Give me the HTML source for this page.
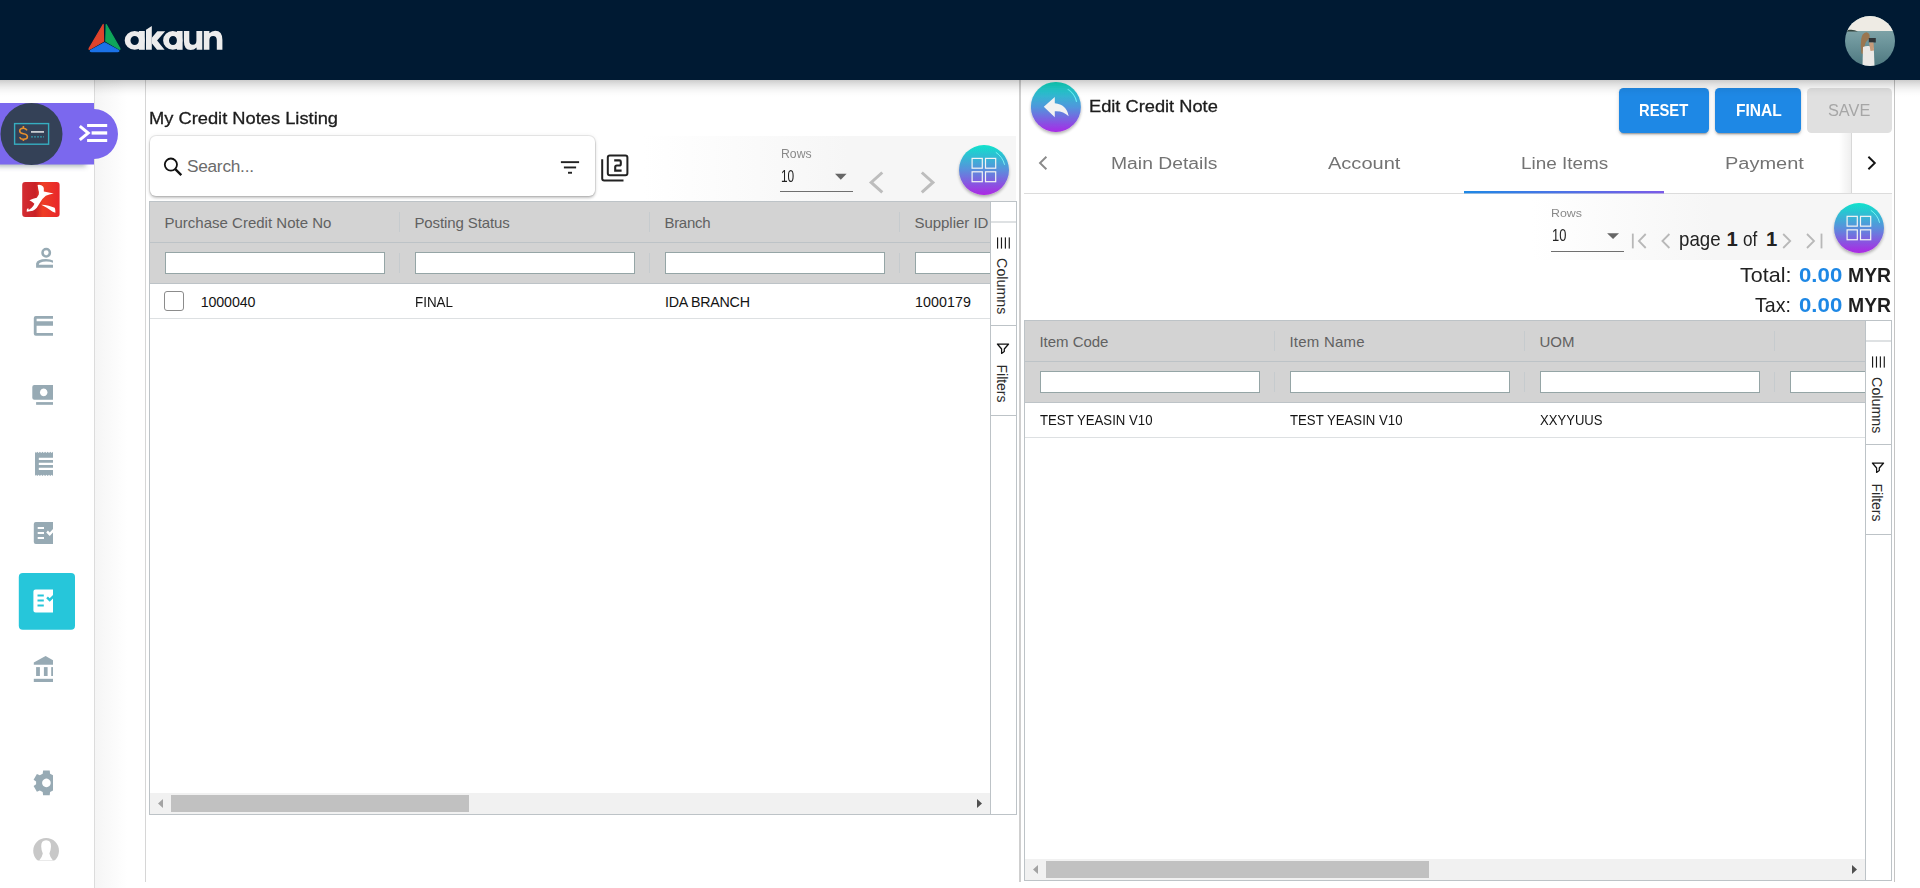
<!DOCTYPE html>
<html><head><meta charset="utf-8">
<style>
*{box-sizing:border-box;margin:0;padding:0}
html,body{width:1920px;height:888px;overflow:hidden;background:#fff;font-family:"Liberation Sans",sans-serif;position:relative}
.a{position:absolute}
.t{position:absolute;white-space:nowrap;font-family:"Liberation Sans",sans-serif}
.hdr{left:0;top:0;width:1920px;height:80px;background:#001a33;z-index:5}
.hshadow{left:0;top:80px;width:1920px;height:17px;background:linear-gradient(to bottom,rgba(0,0,0,.2),rgba(0,0,0,.12) 4px,rgba(0,0,0,.075) 7px,rgba(0,0,0,.04) 10px,rgba(0,0,0,.015) 13px,rgba(0,0,0,0));z-index:4}
.side{left:0;top:80px;width:95px;height:808px;background:#fff;border-right:1px solid #dcdcdc}
.gapg{left:95px;top:80px;width:32px;height:808px;background:linear-gradient(to right,#f5f5f5,#fff)}
.vl145{left:145px;top:80px;width:1px;height:802px;background:#d6d6d6}
.split{left:1019px;top:80px;width:2px;height:802px;background:#cfcfcf}
.vl1894{left:1894px;top:80px;width:1px;height:802px;background:#c4c4c4}
.card{background:#fff;border-radius:6px;box-shadow:0 0 0 1px rgba(0,0,0,.07),0 0 5px 0 rgba(0,0,0,.08),0 2px 3px 0 rgba(0,0,0,.22)}
.hl{position:absolute;background:#bdc3c7}
.finp{position:absolute;background:#fff;border:1px solid #95a5a6}
.csep{position:absolute;width:1px;background:#c6cbce}
.btn{position:absolute;border-radius:4.5px}
</style></head><body>
<div class="a hdr">
<svg class="a" style="left:0;top:0" width="1920" height="80" viewBox="0 0 1920 80">
 <g stroke-linejoin="round">
  <path d="M103.2,24.5 L103.6,41.2 L89.6,49.2 Q88.6,49.6 89.2,48.4 Z" fill="#e0442c" stroke="#e0442c" stroke-width="1.2"/>
  <path d="M106.2,24.5 L119.8,48.4 Q120.4,49.6 119.4,49.2 L105.8,41.2 Z" fill="#0fa65a" stroke="#0fa65a" stroke-width="1.2"/>
  <path d="M104.6,42.8 L118.8,50.6 Q119.2,51.6 117.6,51.7 L91.6,51.7 Q90,51.6 90.4,50.6 Z" fill="#1b72e8" stroke="#1b72e8" stroke-width="1.2"/>
 </g>
 <g fill="#ececec" fill-rule="evenodd">
  <path d="M124.7,40.4 A10,9.4 0 1 0 144.7,40.4 A10,9.4 0 1 0 124.7,40.4 Z M130.5,40.5 A4.2,4.5 0 1 0 138.9,40.5 A4.2,4.5 0 1 0 130.5,40.5 Z"/>
  <rect x="138.9" y="31" width="5.9" height="18.8"/>
  <path d="M146,29.7 L151.8,25.9 V49.8 H146 Z"/>
  <path d="M151.8,37.7 L157.3,31.2 H165.2 L157.1,40.5 L164.6,49.8 H157 L151.8,43.3 Z"/>
  <path d="M163.1,40.4 A9.7,9.4 0 1 0 182.5,40.4 A9.7,9.4 0 1 0 163.1,40.4 Z M169,40.5 A4,4.5 0 1 0 177,40.5 A4,4.5 0 1 0 169,40.5 Z"/>
  <rect x="176.9" y="31" width="5.7" height="18.8"/>
  <path d="M183.9,31 H189.3 V40.5 A3.55,4.3 0 0 0 196.4,40.5 V31 H202.3 V49.8 H196.6 V47.4 Q194.2,50 190.6,50 Q183.9,50 183.9,41 Z"/>
  <path d="M203.8,49.8 V31 H209.4 V33.3 Q211.7,30.8 215.2,30.8 Q222.4,30.8 222.4,40 V49.8 H216.8 V40.3 A3.7,4.3 0 0 0 209.4,40.3 V49.8 Z"/>
 </g>
 <defs>
  <clipPath id="avc"><circle cx="1870" cy="41" r="25"/></clipPath>
  <linearGradient id="sea" x1="0" y1="0" x2="0" y2="1"><stop offset="0" stop-color="#92b1b3"/><stop offset="0.5" stop-color="#6f979d"/><stop offset="1" stop-color="#4e7880"/></linearGradient>
 </defs>
 <g clip-path="url(#avc)">
  <rect x="1845" y="16" width="50" height="50" fill="url(#sea)"/>
  <rect x="1845" y="16" width="50" height="15" fill="#eeebe4"/>
  <path d="M1845,31.6 Q1847,29.6 1850,29.8 Q1854,29.4 1858,31.6 Z" fill="#34453f"/>
  <path d="M1866.5,32.3 Q1862,33 1861.2,39 Q1860.2,46 1861.4,53.5 L1863.5,54 Q1864,46 1866,42 L1869.5,38 Q1870.5,33.5 1866.5,32.3 Z" fill="#9a7650"/>
  <path d="M1863,47 Q1866,45.5 1869,46 L1873.8,48 L1874.5,66 L1862.5,66 Z" fill="#ebe8e6"/>
  <path d="M1868.8,38 L1875.8,38 L1875.8,42.6 L1868.8,42.6 Z" fill="#2e3336"/>
  <path d="M1869,42.6 L1873.5,42.6 L1874,50.5 L1870.5,51 Z" fill="#c79b7a"/>
 </g>
</svg>
</div>
<div class="a hshadow"></div>
<div class="a side"></div>
<svg class="a" style="left:0;top:80px;z-index:6" width="140" height="808" viewBox="0 80 140 808">
 <defs>
  <filter id="pshadow" x="-20%" y="-20%" width="140%" height="160%"><feGaussianBlur in="SourceAlpha" stdDeviation="3"/><feOffset dy="4"/><feComponentTransfer><feFuncA type="linear" slope="0.25"/></feComponentTransfer><feMerge><feMergeNode/><feMergeNode in="SourceGraphic"/></feMerge></filter>
  <linearGradient id="redg" x1="0" x2="1" y1="0" y2="0"><stop offset="0" stop-color="#d42d33"/><stop offset="0.35" stop-color="#c92127"/><stop offset="0.55" stop-color="#ee3d24"/><stop offset="1" stop-color="#e8262b"/></linearGradient>
  <clipPath id="clip53"><rect x="0" y="80" width="53" height="808"/></clipPath>
 </defs>
 <defs><filter id="pblur" x="-20%" y="-100%" width="140%" height="300%"><feGaussianBlur stdDeviation="2.6"/></filter></defs>
 <rect x="-4" y="158.5" width="90" height="8" fill="rgba(60,80,90,.42)" filter="url(#pblur)"/>
 <path d="M0,103 H94 V109 A24,25 0 0 1 94,159 V164.5 H0 Z" fill="#7b68ee"/>
 <circle cx="31.5" cy="134" r="31" fill="#344157"/>
 <rect x="14.6" y="123.6" width="34" height="20.6" fill="none" stroke="#36adc0" stroke-width="1.4"/>
 <g fill="none" stroke="#e8902c" stroke-width="1.6"><path d="M27,130.4 Q26,128.2 23.4,128.2 Q19.7,128.2 19.7,131 Q19.7,133.2 23.4,133.8 Q27.4,134.5 27.4,136.8 Q27.4,139.3 23.4,139.3 Q20.5,139.3 19.6,137.2"/><line x1="23.4" y1="126" x2="23.4" y2="128.2"/><line x1="23.4" y1="139.3" x2="23.4" y2="141"/></g>
 <rect x="31" y="131" width="13" height="1.8" fill="#c9cdd2"/>
 <line x1="31.2" y1="136.8" x2="44" y2="136.8" stroke="#36adc0" stroke-width="1.3" stroke-dasharray="1.6,1.4"/>
 <polyline points="79.8,126.2 88.2,133 79.8,139.8" fill="none" stroke="#fff" stroke-width="3"/>
 <rect x="87.1" y="124" width="20.1" height="3" fill="#fff"/>
 <rect x="91.6" y="131.3" width="15.6" height="3.3" fill="#fff"/>
 <rect x="87.1" y="139" width="20.1" height="3" fill="#fff"/>

 <rect x="22.2" y="181.9" width="37.4" height="35" rx="3" fill="url(#redg)"/>
 <path d="M37.6,184.9 Q40,184.6 41.3,185.2 Q43.6,186.4 43.8,187.9 L43.8,191.4 L53.7,193.4 Q49,194.2 45.8,195.8 Q41.5,199 39.3,203.8 L36.8,207.7 Q35,209.8 32.9,210.7 L26.7,211.7 Q26.6,209.4 27.2,208.7 L28.4,208.2 L28.7,210 Q32,208 33.4,205.8 L34.4,203.8 Q32,201.4 29.4,200.3 Q33,198.4 36.8,197.8 L38.8,194.4 Q39.2,191.5 38.3,189.4 Z" fill="#fff"/>
 <path d="M41.3,204.8 Q45,204.9 48.7,205.8 L54.7,207.7 Q55.6,210 55.4,212.7 Q54,212.4 52.7,211.7 L46.8,207.7 Z" fill="#fff"/>

 <g class="ic" clip-path="url(#clip53)">
  <circle cx="46.2" cy="252.8" r="3.7" fill="none" stroke="#97aab4" stroke-width="2.5"/>
  <path d="M36.1,267.7 V263.5 Q37,259.2 46,259.1 Q50.5,259.2 53,260.5 V262.8 Q50,261.5 46,261.6 Q39,261.8 38.8,264.8 H53 V267.7 Z" fill="#97aab4"/>

  <path d="M35.8,315.9 H53 V318.8 H36.6 V321.2 H53 V325.8 H36.6 V333 H53 V335.7 H35.8 Q33.8,335.7 33.8,333.7 V317.9 Q33.8,315.9 35.8,315.9 Z" fill="#97aab4"/>

  <path d="M34.3,385 H53 V399.8 H34.3 Q32.3,399.8 32.3,397.8 V387 Q32.3,385 34.3,385 Z M43.7,388.6 A3.8,3.8 0 1 0 43.71,388.6 Z" fill="#97aab4" fill-rule="evenodd"/>
  <rect x="36.1" y="402.1" width="17" height="2.7" fill="#97aab4"/>

  <path d="M35,451.8 L36,453 L37.3,451.8 L38.6,453 L39.9,451.8 L41.2,453 L42.5,451.8 L43.8,453 L45.1,451.8 L46.4,453 L47.7,451.8 L49,453 L50.3,451.8 L51.6,453 L53,451.8 V457.7 H38.8 V460 H53 V462.8 H38.8 V465.1 H53 V467.8 H38.8 V470.1 H53 V475.9 L51.6,474.7 L50.3,475.9 L49,474.7 L47.7,475.9 L46.4,474.7 L45.1,475.9 L43.8,474.7 L42.5,475.9 L41.2,474.7 L39.9,475.9 L38.6,474.7 L37.3,475.9 L36,474.7 L35,475.9 Z" fill="#97aab4"/>

  <path d="M35.8,521.9 H53 V529 L49.7,532.4 L47.9,530.6 L46.2,532.4 L49.7,535.9 L53,532.6 V543.9 H35.8 Q33.8,543.9 33.8,541.9 V523.9 Q33.8,521.9 35.8,521.9 Z M37.7,527 V529 H44 V527 Z M37.7,532 V534 H44 V532 Z M37.7,537 V539 H44 V537 Z" fill="#97aab4" fill-rule="evenodd"/>

  <path d="M33.8,662.4 L45.6,656 L53,660.2 V664.8 H33.8 Z" fill="#97aab4"/>
  <rect x="36.1" y="667.1" width="3.8" height="8.9" fill="#97aab4"/>
  <rect x="43.9" y="667.1" width="3.7" height="8.9" fill="#97aab4"/>
  <rect x="51.2" y="667.1" width="3.7" height="8.9" fill="#97aab4"/>
  <rect x="33.8" y="678.8" width="19.2" height="3.2" fill="#97aab4"/>

  <g transform="translate(46.4,782.9)">
   <path fill="#97aab4" fill-rule="evenodd" d="M-3.3,-12.4 H3.3 L3.7,-9.2 L6.6,-7.6 L9.5,-8.9 L12.8,-3.2 L10.3,-1.3 V1.3 L12.8,3.2 L9.5,8.9 L6.6,7.6 L3.7,9.2 L3.3,12.4 H-3.3 L-3.7,9.2 L-6.6,7.6 L-9.5,8.9 L-12.8,3.2 L-10.3,1.3 V-1.3 L-12.8,-3.2 L-9.5,-8.9 L-6.6,-7.6 L-3.7,-9.2 Z M0,-4.3 A4.3,4.3 0 1 0 0.01,-4.3 Z"/>
  </g>
 </g>
 <rect x="18.8" y="573" width="56.2" height="56.8" rx="4" fill="#26c6da"/>
 <path d="M35.6,589.5 H53 V595 L49.7,598.3 L47.9,596.5 L46.2,598.3 L49.7,601.8 L53,598.5 V612.5 H35.6 Q33.4,612.5 33.4,610.5 V591.5 Q33.4,589.5 35.6,589.5 Z M37.5,594.6 V596.6 H43.8 V594.6 Z M37.5,599.6 V601.6 H43.8 V599.6 Z M37.5,604.6 V606.6 H43.8 V604.6 Z" fill="#fff" fill-rule="evenodd"/>

 <defs><clipPath id="avclip"><rect x="30" y="835" width="32" height="25.5"/></clipPath></defs>
 <g clip-path="url(#avclip)">
  <circle cx="46.1" cy="850.8" r="12.9" fill="#c8c8c8"/>
  <path d="M41.2,846.5 Q41,840.2 46.1,840.2 Q51.2,840.2 51,846.5 Q50.8,851 49.4,853.4 Q50,857 53,860.5 H39.2 Q42.2,857 42.8,853.4 Q41.4,851 41.2,846.5 Z" fill="#fff"/>
 </g>
</svg>
<div class="a gapg"></div>
<div class="a vl145"></div>
<div class="a split"></div>
<div class="a vl1894"></div>
<div class="t" style="left:149.20px;top:110px;font-size:17.25px;line-height:17.25px;color:#1c1c1c;transform:scaleX(1.0601);transform-origin:0.00px 0;-webkit-text-stroke:0.3px #1c1c1c;">My Credit Notes Listing</div>
<div class="a" style="left:644px;top:136px;width:372px;height:65px;background:linear-gradient(to right,rgba(246,246,246,0),#f6f6f6 55%)"></div>
<div class="a card" style="left:150px;top:136px;width:444.5px;height:59.5px"></div>
<svg class="a" style="left:0;top:0" width="1020" height="200"><circle cx="170.9" cy="164.6" r="6.1" fill="none" stroke="#111" stroke-width="1.8"/><line x1="175.3" y1="169.2" x2="181.3" y2="175.2" stroke="#111" stroke-width="2.4"/><rect x="560.9" y="161.2" width="18.2" height="1.9" fill="#222"/><rect x="563.9" y="166.5" width="12.2" height="1.9" fill="#222"/><rect x="568" y="171.8" width="4" height="1.9" fill="#222"/><rect x="607.8" y="155.4" width="19.6" height="19.8" rx="2" fill="none" stroke="#222" stroke-width="2"/><path d="M602.2,159.2 V178.5 Q602.2,180.5 604.2,180.5 H623.5" fill="none" stroke="#222" stroke-width="2"/><path d="M614.2,160.4 H619.4 Q620.8,160.4 620.8,161.8 V163.9 Q620.8,165.5 619.2,165.5 H616.8 Q615.2,165.5 615.2,167.1 V170.6 H621.6" fill="none" stroke="#222" stroke-width="2.1"/><polygon points="835,173.8 846.6,173.8 840.8,179.8" fill="#666"/><rect x="780" y="191" width="73" height="1" fill="#6f6f6f"/><polyline points="882.3,172.5 871.2,182.4 882.3,192.3" fill="none" stroke="#bdbdbd" stroke-width="3"/><polyline points="921.8,172.5 932.9,182.4 921.8,192.3" fill="none" stroke="#bdbdbd" stroke-width="3"/></svg>
<div class="t" style="left:186.90px;top:158px;font-size:17.25px;line-height:17.25px;color:#6b6b6b;letter-spacing:-0.238px;">Search...</div>
<div class="t" style="left:780.50px;top:147px;font-size:13.0px;line-height:13.0px;color:#8a8a8a;transform:scaleX(0.9415);transform-origin:0.00px 0;">Rows</div>
<div class="t" style="left:780.80px;top:168px;font-size:17.25px;line-height:17.25px;color:#222;transform:scaleX(0.6894);transform-origin:0.00px 0;">10</div>
<svg class="a" style="left:954.1px;top:139.9px;overflow:visible" width="60" height="60" viewBox="954.1 139.9 60 60"><defs><linearGradient id="gb1" x1="0" y1="0" x2="0" y2="1"><stop offset="0" stop-color="#0fe3cc"/><stop offset="0.5" stop-color="#5a8fdc"/><stop offset="1" stop-color="#ad27e4"/></linearGradient><filter id="gb1s" x="-30%" y="-30%" width="160%" height="160%"><feGaussianBlur in="SourceAlpha" stdDeviation="1.5"/><feOffset dy="1.5"/><feComponentTransfer><feFuncA type="linear" slope="0.3"/></feComponentTransfer><feMerge><feMergeNode/><feMergeNode in="SourceGraphic"/></feMerge></filter></defs><circle cx="984.1" cy="169.9" r="25" fill="url(#gb1)" filter="url(#gb1s)"/><path d="M995.9,152.20000000000002 A21,21 0 0 1 1004.7,164.70000000000002" fill="none" stroke="rgba(140,255,250,.8)" stroke-width="1"/><g fill="none" stroke="#f4f4f4" stroke-width="1.2"><rect x="972.2" y="158.3" width="10.2" height="9.8"/><rect x="985.6" y="158.3" width="10.2" height="9.8"/><rect x="972.2" y="171.7" width="10.2" height="9.9"/><rect x="985.6" y="171.7" width="10.2" height="9.9"/></g></svg>
<div class="a" style="left:149px;top:201px;width:868px;height:614px;border:1px solid #bdc3c7;background:#fff"></div>
<div class="a" style="left:150px;top:202px;width:840px;height:612px;overflow:hidden">
<div class="a" style="left:0;top:0;width:840px;height:82px;background:#d3d3d3"></div>
<div class="hl" style="left:0;top:40px;width:840px;height:1px"></div>
<div class="hl" style="left:0;top:81px;width:840px;height:1px"></div>
<div class="a" style="left:0;top:116px;width:840px;height:1px;background:#dde0e2"></div>
<div class="finp" style="left:15px;top:50px;width:220px;height:22px"></div>
<div class="t" style="left:14.40px;top:13px;font-size:15.0px;line-height:15.0px;color:#616161;letter-spacing:0.013px;">Purchase Credit Note No</div>
<div class="csep" style="left:249px;top:10px;height:20px"></div>
<div class="csep" style="left:249px;top:51px;height:20px"></div>
<div class="finp" style="left:265px;top:50px;width:220px;height:22px"></div>
<div class="t" style="left:264.40px;top:13px;font-size:15.0px;line-height:15.0px;color:#616161;letter-spacing:-0.096px;">Posting Status</div>
<div class="csep" style="left:499px;top:10px;height:20px"></div>
<div class="csep" style="left:499px;top:51px;height:20px"></div>
<div class="finp" style="left:515px;top:50px;width:220px;height:22px"></div>
<div class="t" style="left:514.40px;top:13px;font-size:15.0px;line-height:15.0px;color:#616161;letter-spacing:-0.270px;">Branch</div>
<div class="csep" style="left:749px;top:10px;height:20px"></div>
<div class="csep" style="left:749px;top:51px;height:20px"></div>
<div class="finp" style="left:765px;top:50px;width:220px;height:22px"></div>
<div class="t" style="left:764.40px;top:13px;font-size:15.0px;line-height:15.0px;color:#616161;letter-spacing:-0.017px;">Supplier ID</div>
<div class="t" style="left:50.80px;top:93px;font-size:14.25px;line-height:14.25px;color:#141414;letter-spacing:-0.151px;">1000040</div>
<div class="t" style="left:265.00px;top:93px;font-size:14.25px;line-height:14.25px;color:#141414;transform:scaleX(0.9406);transform-origin:0.00px 0;">FINAL</div>
<div class="t" style="left:515.00px;top:93px;font-size:14.25px;line-height:14.25px;color:#141414;letter-spacing:-0.238px;">IDA BRANCH</div>
<div class="t" style="left:765.00px;top:93px;font-size:14.25px;line-height:14.25px;color:#141414;letter-spacing:0.083px;">1000179</div>
<div class="a" style="left:14.300000000000011px;top:89px;width:20px;height:20px;border:1.5px solid #8c8c8c;border-radius:3px;background:#fff"></div>
<div class="a" style="left:0;top:591px;width:840px;height:21px;background:#f1f1f1"></div>
<div class="a" style="left:21px;top:593px;width:298.2px;height:17px;background:#c1c1c1"></div>
<svg class="a" style="left:0;top:591px" width="840" height="21"><polygon points="8,10.5 13,6 13,15" fill="#a3a3a3"/><polygon points="827,6 832,10.5 827,15" fill="#505050"/></svg>
</div>
<div class="a" style="left:990px;top:202px;width:1px;height:612px;background:#bdc3c7"></div>
<svg class="a" style="left:990px;top:201px" width="27" height="614" viewBox="990 201 27 614"><rect x="990" y="221.5" width="26" height="1" fill="#bdc3c7"/><rect x="990" y="325" width="26" height="1" fill="#bdc3c7"/><rect x="990" y="415" width="26" height="1" fill="#bdc3c7"/><rect x="997.00" y="237.4" width="1.15" height="11.2" fill="#1a1a1a"/><rect x="1000.90" y="237.4" width="1.15" height="11.2" fill="#1a1a1a"/><rect x="1004.80" y="237.4" width="1.15" height="11.2" fill="#1a1a1a"/><rect x="1008.70" y="237.4" width="1.15" height="11.2" fill="#1a1a1a"/><text transform="translate(997.2,258.1) rotate(90)" font-family="Liberation Sans" font-size="14.6" fill="#2a2a2a" textLength="56.2" lengthAdjust="spacingAndGlyphs">Columns</text><path d="M997.4,344 H1008.6 L1004.3,349 V351.6 L1001.6,353.4 V349 Z" fill="none" stroke="#111" stroke-width="1.25" stroke-linejoin="round"/><text transform="translate(997.2,364.5) rotate(90)" font-family="Liberation Sans" font-size="14.6" fill="#2a2a2a" textLength="38" lengthAdjust="spacingAndGlyphs">Filters</text></svg>
<svg class="a" style="left:1020px;top:80px;overflow:visible" width="80" height="60" viewBox="1020 80 80 60"><defs><linearGradient id="bkg" x1="0" y1="0" x2="0" y2="1"><stop offset="0" stop-color="#0fdcc2"/><stop offset="0.5" stop-color="#4f97dc"/><stop offset="1" stop-color="#a82ae6"/></linearGradient><filter id="bks" x="-30%" y="-30%" width="160%" height="160%"><feGaussianBlur in="SourceAlpha" stdDeviation="1.5"/><feOffset dy="1.5"/><feComponentTransfer><feFuncA type="linear" slope="0.3"/></feComponentTransfer><feMerge><feMergeNode/><feMergeNode in="SourceGraphic"/></feMerge></filter></defs><circle cx="1055.9" cy="106.9" r="25" fill="url(#bkg)" filter="url(#bks)"/><path d="M1067.7,89.1 A20,20 0 0 1 1076.6,101.8" fill="none" stroke="rgba(120,255,255,.8)" stroke-width="1.1"/><path d="M1043.8,106.8 L1054.8,97 V103.3 Q1066.4,104.2 1068.7,116.3 Q1063.2,110.6 1054.8,111.2 V117.2 Z" fill="#f2f2f2"/></svg>
<div class="t" style="left:1088.60px;top:98px;font-size:17.25px;line-height:17.25px;color:#1c1c1c;transform:scaleX(1.0576);transform-origin:0.00px 0;-webkit-text-stroke:0.3px #1c1c1c;">Edit Credit Note</div>
<div class="btn" style="left:1619px;top:88px;width:90px;height:45px;background:#1e88e5;box-shadow:0 3px 1px -2px rgba(0,0,0,.2),0 2px 2px 0 rgba(0,0,0,.14),0 1px 5px 0 rgba(0,0,0,.12)"></div>
<div class="btn" style="left:1715.3px;top:88px;width:85.5px;height:45px;background:#1e88e5;box-shadow:0 3px 1px -2px rgba(0,0,0,.2),0 2px 2px 0 rgba(0,0,0,.14),0 1px 5px 0 rgba(0,0,0,.12)"></div>
<div class="btn" style="left:1807px;top:88px;width:84.7px;height:45px;background:#e0e0e0"></div>
<div class="t" style="left:1639.00px;top:102px;font-size:17.25px;line-height:17.25px;color:#fff;font-weight:bold;transform:scaleX(0.8552);transform-origin:0.00px 0;">RESET</div>
<div class="t" style="left:1735.70px;top:102px;font-size:17.25px;line-height:17.25px;color:#fff;font-weight:bold;transform:scaleX(0.9016);transform-origin:0.00px 0;">FINAL</div>
<div class="t" style="left:1828.30px;top:102px;font-size:17.25px;line-height:17.25px;color:#a6a6a6;transform:scaleX(0.9450);transform-origin:0.00px 0;">SAVE</div>
<div class="a" style="left:1839px;top:133px;width:13px;height:60px;background:linear-gradient(to right,rgba(0,0,0,0),rgba(0,0,0,.07))"></div>
<div class="a" style="left:1851px;top:133px;width:1px;height:60px;background:#d8d8d8"></div>
<div class="a" style="left:1024px;top:193px;width:868px;height:1px;background:#dcdcdc"></div>
<svg class="a" style="left:1020px;top:150px" width="880" height="50" viewBox="1020 150 880 50"><polyline points="1046.4,156.8 1040,163 1046.4,169.2" fill="none" stroke="#8a8a8a" stroke-width="1.9"/><polyline points="1868.4,156.8 1874.8,163 1868.4,169.2" fill="none" stroke="#141414" stroke-width="1.9"/><defs><linearGradient id="tabul" x1="0" x2="1" y1="0" y2="0"><stop offset="0" stop-color="#1e88e5"/><stop offset="1" stop-color="#7b5be8"/></linearGradient></defs><rect x="1464" y="191" width="200" height="2.4" fill="url(#tabul)"/></svg>
<div class="t" style="left:1110.70px;top:155px;font-size:17.25px;line-height:17.25px;color:#737373;transform:scaleX(1.1204);transform-origin:0.00px 0;">Main Details</div>
<div class="t" style="left:1328.20px;top:155px;font-size:17.25px;line-height:17.25px;color:#737373;transform:scaleX(1.1610);transform-origin:0.00px 0;">Account</div>
<div class="t" style="left:1520.50px;top:155px;font-size:17.25px;line-height:17.25px;color:#737373;transform:scaleX(1.0966);transform-origin:0.00px 0;">Line Items</div>
<div class="t" style="left:1725.20px;top:155px;font-size:17.25px;line-height:17.25px;color:#737373;transform:scaleX(1.1580);transform-origin:0.00px 0;">Payment</div>
<div class="a" style="left:1532px;top:194px;width:360px;height:66px;background:linear-gradient(to right,rgba(246,246,246,0),#f6f6f6 50%)"></div>
<div class="t" style="left:1551.30px;top:207px;font-size:11.75px;line-height:11.75px;color:#8a8a8a;transform:scaleX(1.0553);transform-origin:0.00px 0;">Rows</div>
<div class="t" style="left:1551.60px;top:227px;font-size:17.25px;line-height:17.25px;color:#222;transform:scaleX(0.7468);transform-origin:0.00px 0;">10</div>
<svg class="a" style="left:1540px;top:225px" width="300" height="30" viewBox="1540 225 300 30"><polygon points="1607.1,233.2 1619,233.2 1613.05,239.1" fill="#666"/><rect x="1551" y="251" width="73" height="1" fill="#6f6f6f"/><g fill="none" stroke="#b8b8b8" stroke-width="1.8"><line x1="1632.8" y1="233.6" x2="1632.8" y2="248.4"/><polyline points="1645.7,234 1638.9,241 1645.7,248"/><polyline points="1669.4,234 1662.4,241 1669.4,248"/><polyline points="1783.2,234 1790.2,241 1783.2,248"/><polyline points="1807,234 1814,241 1807,248"/><line x1="1821.5" y1="233.6" x2="1821.5" y2="248.4"/></g></svg>
<div class="t" style="left:1679.30px;top:229px;font-size:20.25px;line-height:20.25px;color:#222;transform:scaleX(0.9233);transform-origin:0.00px 0;">page</div>
<div class="t" style="left:1726.40px;top:229px;font-size:20.25px;line-height:20.25px;color:#222;font-weight:bold;">1</div>
<div class="t" style="left:1742.60px;top:229px;font-size:20.25px;line-height:20.25px;color:#222;transform:scaleX(0.8457);transform-origin:0.00px 0;">of</div>
<div class="t" style="left:1766.00px;top:229px;font-size:20.25px;line-height:20.25px;color:#222;font-weight:bold;">1</div>
<svg class="a" style="left:1829px;top:197.85px;overflow:visible" width="60" height="60" viewBox="1829 197.85 60 60"><defs><linearGradient id="gb2" x1="0" y1="0" x2="0" y2="1"><stop offset="0" stop-color="#0fe3cc"/><stop offset="0.5" stop-color="#5a8fdc"/><stop offset="1" stop-color="#ad27e4"/></linearGradient><filter id="gb2s" x="-30%" y="-30%" width="160%" height="160%"><feGaussianBlur in="SourceAlpha" stdDeviation="1.5"/><feOffset dy="1.5"/><feComponentTransfer><feFuncA type="linear" slope="0.3"/></feComponentTransfer><feMerge><feMergeNode/><feMergeNode in="SourceGraphic"/></feMerge></filter></defs><circle cx="1859" cy="227.85" r="25" fill="url(#gb2)" filter="url(#gb2s)"/><path d="M1870.8,210.15 A21,21 0 0 1 1879.6,222.65" fill="none" stroke="rgba(140,255,250,.8)" stroke-width="1"/><g fill="none" stroke="#f4f4f4" stroke-width="1.2"><rect x="1847.1" y="216.2" width="10.2" height="9.8"/><rect x="1860.5" y="216.2" width="10.2" height="9.8"/><rect x="1847.1" y="229.7" width="10.2" height="9.9"/><rect x="1860.5" y="229.7" width="10.2" height="9.9"/></g></svg>
<div class="t" style="left:1739.70px;top:265px;font-size:20.25px;line-height:20.25px;color:#222;transform:scaleX(1.0620);transform-origin:0.00px 0;">Total:</div>
<div class="t" style="left:1798.60px;top:265px;font-size:20.25px;line-height:20.25px;color:#1e88e5;font-weight:bold;transform:scaleX(1.0968);transform-origin:0.00px 0;">0.00</div>
<div class="t" style="left:1847.80px;top:265px;font-size:20.25px;line-height:20.25px;color:#1f1f1f;font-weight:bold;transform:scaleX(0.9565);transform-origin:0.00px 0;">MYR</div>
<div class="t" style="left:1755.20px;top:295px;font-size:20.25px;line-height:20.25px;color:#222;transform:scaleX(0.9661);transform-origin:0.00px 0;">Tax:</div>
<div class="t" style="left:1798.60px;top:295px;font-size:20.25px;line-height:20.25px;color:#1e88e5;font-weight:bold;transform:scaleX(1.0968);transform-origin:0.00px 0;">0.00</div>
<div class="t" style="left:1847.80px;top:295px;font-size:20.25px;line-height:20.25px;color:#1f1f1f;font-weight:bold;transform:scaleX(0.9565);transform-origin:0.00px 0;">MYR</div>
<div class="a" style="left:1024px;top:320px;width:868px;height:561px;border:1px solid #bdc3c7;background:#fff"></div>
<div class="a" style="left:1025px;top:321px;width:840px;height:559px;overflow:hidden">
<div class="a" style="left:0;top:0;width:840px;height:82px;background:#d3d3d3"></div>
<div class="hl" style="left:0;top:40px;width:840px;height:1px"></div>
<div class="hl" style="left:0;top:81px;width:840px;height:1px"></div>
<div class="a" style="left:0;top:116px;width:840px;height:1px;background:#dde0e2"></div>
<div class="finp" style="left:15px;top:50px;width:220px;height:22px"></div>
<div class="t" style="left:14.40px;top:13px;font-size:15.0px;line-height:15.0px;color:#616161;letter-spacing:-0.016px;">Item Code</div>
<div class="csep" style="left:249px;top:10px;height:20px"></div>
<div class="csep" style="left:249px;top:51px;height:20px"></div>
<div class="finp" style="left:265px;top:50px;width:220px;height:22px"></div>
<div class="t" style="left:264.40px;top:13px;font-size:15.0px;line-height:15.0px;color:#616161;letter-spacing:0.231px;">Item Name</div>
<div class="csep" style="left:499px;top:10px;height:20px"></div>
<div class="csep" style="left:499px;top:51px;height:20px"></div>
<div class="finp" style="left:515px;top:50px;width:220px;height:22px"></div>
<div class="t" style="left:514.40px;top:13px;font-size:15.0px;line-height:15.0px;color:#616161;letter-spacing:0.088px;">UOM</div>
<div class="csep" style="left:749px;top:10px;height:20px"></div>
<div class="csep" style="left:749px;top:51px;height:20px"></div>
<div class="finp" style="left:765px;top:50px;width:220px;height:22px"></div>
<div class="t" style="left:15.20px;top:92px;font-size:14.25px;line-height:14.25px;color:#141414;transform:scaleX(0.9261);transform-origin:0.00px 0;">TEST YEASIN V10</div>
<div class="t" style="left:265.20px;top:92px;font-size:14.25px;line-height:14.25px;color:#141414;transform:scaleX(0.9261);transform-origin:0.00px 0;">TEST YEASIN V10</div>
<div class="t" style="left:514.70px;top:92px;font-size:14.25px;line-height:14.25px;color:#141414;transform:scaleX(0.9176);transform-origin:0.00px 0;">XXYYUUS</div>
<div class="a" style="left:0;top:538px;width:840px;height:21px;background:#f1f1f1"></div>
<div class="a" style="left:21px;top:540px;width:383px;height:17px;background:#c1c1c1"></div>
<svg class="a" style="left:0;top:538px" width="840" height="21"><polygon points="8,10.5 13,6 13,15" fill="#a3a3a3"/><polygon points="827,6 832,10.5 827,15" fill="#505050"/></svg>
</div>
<div class="a" style="left:1865px;top:321px;width:1px;height:559px;background:#bdc3c7"></div>
<svg class="a" style="left:1865px;top:320px" width="27" height="561" viewBox="1865 320 27 561"><rect x="1865" y="340.5" width="26" height="1" fill="#bdc3c7"/><rect x="1865" y="444" width="26" height="1" fill="#bdc3c7"/><rect x="1865" y="534" width="26" height="1" fill="#bdc3c7"/><rect x="1872.00" y="356.4" width="1.15" height="11.2" fill="#1a1a1a"/><rect x="1875.90" y="356.4" width="1.15" height="11.2" fill="#1a1a1a"/><rect x="1879.80" y="356.4" width="1.15" height="11.2" fill="#1a1a1a"/><rect x="1883.70" y="356.4" width="1.15" height="11.2" fill="#1a1a1a"/><text transform="translate(1872.2,377.1) rotate(90)" font-family="Liberation Sans" font-size="14.6" fill="#2a2a2a" textLength="56.2" lengthAdjust="spacingAndGlyphs">Columns</text><path d="M1872.4,463 H1883.6 L1879.3,468 V470.6 L1876.6,472.4 V468 Z" fill="none" stroke="#111" stroke-width="1.25" stroke-linejoin="round"/><text transform="translate(1872.2,483.5) rotate(90)" font-family="Liberation Sans" font-size="14.6" fill="#2a2a2a" textLength="38" lengthAdjust="spacingAndGlyphs">Filters</text></svg>
</body></html>
